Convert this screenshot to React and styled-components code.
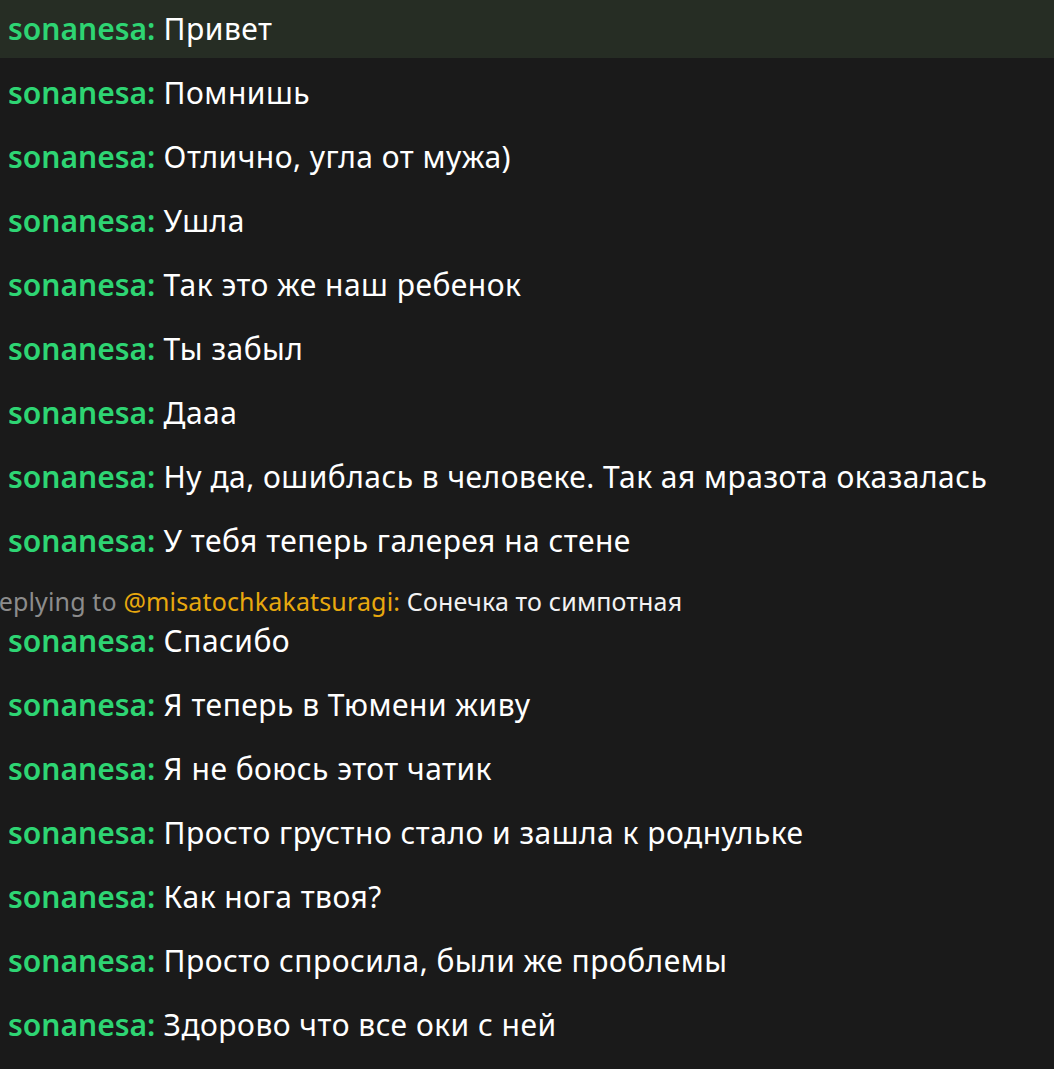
import React from "react";
import styled, { createGlobalStyle } from "styled-components";

const Global = createGlobalStyle`
  html, body { margin: 0; padding: 0; background: #1a1a1a; }
  body { font-family: "Noto Sans", "Open Sans", sans-serif; overflow: hidden; }
`;

const Chat = styled.div`
  width: 1054px;
  height: 1069px;
  overflow: hidden;
  background: #1a1a1a;
  display: flex;
  flex-direction: column;
`;

const Row = styled.div`
  display: flex;
  flex-direction: column;
  padding: 11px 0 11px 8px;
  margin-bottom: 6px;
  background: ${(p) => (p.$active ? "#262d24" : "transparent")};
`;

const Line = styled.div`
  font-size: 30px;
  line-height: 36px;
  letter-spacing: 0.48px;
  color: #ffffff;
  white-space: nowrap;
`;

const User = styled.span`
  color: #2ed573;
  font-weight: 600;
  font-size: 30px;
  letter-spacing: 0;
`;

const Reply = styled.div`
  margin-left: -25px;
  margin-bottom: 8px;
  font-size: 25px;
  line-height: 28px;
  letter-spacing: 0.15px;
  color: #f2f2f2;
  white-space: nowrap;
`;

const ReplyLabel = styled.span`
  color: #8c8c8c;
`;

const ReplyUser = styled.span`
  color: #e8a90e;
`;

const messages = [
  { text: "Привет", active: true },
  { text: "Помнишь" },
  { text: "Отлично, угла от мужа)" },
  { text: "Ушла" },
  { text: "Так это же наш ребенок" },
  { text: "Ты забыл" },
  { text: "Дааа" },
  { text: "Ну да, ошиблась в человеке. Так ая мразота оказалась" },
  { text: "У тебя теперь галерея на стене" },
  { text: "Спасибо", reply: { user: "@misatochkakatsuragi", text: "Сонечка то симпотная" } },
  { text: "Я теперь в Тюмени живу" },
  { text: "Я не боюсь этот чатик" },
  { text: "Просто грустно стало и зашла к роднульке" },
  { text: "Как нога твоя?" },
  { text: "Просто спросила, были же проблемы" },
  { text: "Здорово что все оки с ней" },
];

export default function App() {
  return (
    <Chat>
      <Global />
      {messages.map((m, i) => (
        <Row key={i} $active={m.active}>
          {m.reply && (
            <Reply>
              <ReplyLabel>Replying to </ReplyLabel>
              <ReplyUser>{m.reply.user}:</ReplyUser> {m.reply.text}
            </Reply>
          )}
          <Line>
            <User>sonanesa:</User> {m.text}
          </Line>
        </Row>
      ))}
    </Chat>
  );
}
